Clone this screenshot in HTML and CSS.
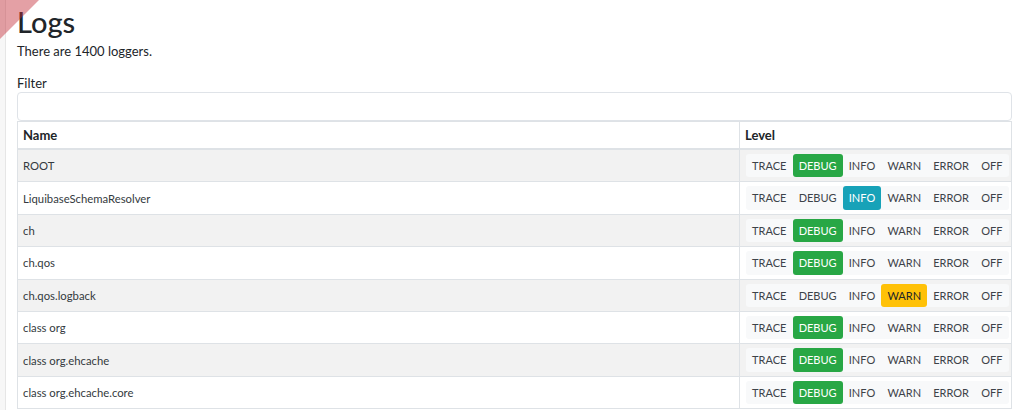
FILE: index.html
```html
<!DOCTYPE html>
<html lang="en">
<head>
  <meta charset="UTF-8" />
  <meta name="viewport" content="width=device-width, initial-scale=1" />
  <title>Logs</title>
  <link rel="stylesheet" href="styles.css">
</head>
<body>
  <div class="ribbon"></div>
  <div class="page">
    <h2>Logs</h2>
    <p class="count">There are 1400 loggers.</p>

    <label class="filter-label" for="filter">Filter</label>
    <input type="text" id="filter" class="filter-input" />

    <table class="logs">
      <thead>
        <tr>
          <th class="col-name">Name</th>
          <th class="col-level">Level</th>
        </tr>
      </thead>
      <tbody>
        <tr>
          <td>ROOT</td>
          <td><div class="levels"><span>TRACE</span><span class="on debug">DEBUG</span><span>INFO</span><span>WARN</span><span>ERROR</span><span>OFF</span></div></td>
        </tr>
        <tr>
          <td>LiquibaseSchemaResolver</td>
          <td><div class="levels"><span>TRACE</span><span>DEBUG</span><span class="on info">INFO</span><span>WARN</span><span>ERROR</span><span>OFF</span></div></td>
        </tr>
        <tr>
          <td>ch</td>
          <td><div class="levels"><span>TRACE</span><span class="on debug">DEBUG</span><span>INFO</span><span>WARN</span><span>ERROR</span><span>OFF</span></div></td>
        </tr>
        <tr>
          <td>ch.qos</td>
          <td><div class="levels"><span>TRACE</span><span class="on debug">DEBUG</span><span>INFO</span><span>WARN</span><span>ERROR</span><span>OFF</span></div></td>
        </tr>
        <tr>
          <td>ch.qos.logback</td>
          <td><div class="levels"><span>TRACE</span><span>DEBUG</span><span>INFO</span><span class="on warn">WARN</span><span>ERROR</span><span>OFF</span></div></td>
        </tr>
        <tr>
          <td>class org</td>
          <td><div class="levels"><span>TRACE</span><span class="on debug">DEBUG</span><span>INFO</span><span>WARN</span><span>ERROR</span><span>OFF</span></div></td>
        </tr>
        <tr>
          <td>class org.ehcache</td>
          <td><div class="levels"><span>TRACE</span><span class="on debug">DEBUG</span><span>INFO</span><span>WARN</span><span>ERROR</span><span>OFF</span></div></td>
        </tr>
        <tr>
          <td>class org.ehcache.core</td>
          <td><div class="levels"><span>TRACE</span><span class="on debug">DEBUG</span><span>INFO</span><span>WARN</span><span>ERROR</span><span>OFF</span></div></td>
        </tr>
      </tbody>
    </table>
  </div>
</body>
</html>
```

FILE: styles.css
```css
body {
  font-family: Lato, 'Noto Sans', sans-serif;
  background: #f7f7f7;
  color: #212529;
  margin: 0;
  overflow: hidden;
}
.page {
  margin-left: 5px;
  border-left: 1px solid #e6e6e6;
  background: #fff;
  padding: 4px 12px 0 11px;
  min-height: 410px;
}
.ribbon {
  position: absolute;
  top: 0;
  left: 0;
  width: 39px;
  height: 39px;
  background: rgba(195, 45, 55, 0.45);
  clip-path: polygon(0 0, 100% 0, 0 100%);
  z-index: 2;
}
h2 {
  font-size: 29px;
  font-weight: 500;
  margin: 0 0 2px;
  line-height: 36px;
}
.count {
  font-size: 13px;
  margin: 0 0 14px;
  line-height: 18px;
}
.filter-label {
  display: block;
  font-size: 13px;
  line-height: 18px;
  margin-bottom: 0;
}
.filter-input {
  display: block;
  box-sizing: border-box;
  width: 100%;
  height: 29px;
  border: 1px solid #dfe3e8;
  border-radius: 4px;
  margin: 0;
}
table.logs {
  width: 100%;
  table-layout: fixed;
  border-collapse: collapse;
  border: 1px solid #dee2e6;
}
.logs th {
  text-align: left;
  font-size: 13px;
  font-weight: 700;
  line-height: 18px;
  padding: 4px 5px;
  border: 1px solid #dee2e6;
  border-bottom-width: 2px;
}
.logs .col-level { width: 260px; padding-left: 5px; padding-right: 6px; }
.logs td {
  font-size: 11.3px;
  color: #343a40;
  padding: 4px 5px;
  border: 1px solid #dee2e6;
  vertical-align: middle;
}
.logs td + td { padding-left: 6px; }
.logs tbody tr:nth-child(odd) { background: #f2f2f2; }
.levels {
  display: flex;
  background: #f8f9fa;
  border-radius: 3px;
  width: fit-content;
}
.levels span {
  font-size: 11px;
  height: 23.4px;
  line-height: 23.4px;
  padding: 0 6.1px;
  color: #3d4349;
  border-radius: 3px;
}
.levels .on { color: #fff; }
.levels .debug { background: #28a745; }
.levels .info { background: #17a2b8; }
.levels .warn { background: #ffc107; color: #212529; }
```
